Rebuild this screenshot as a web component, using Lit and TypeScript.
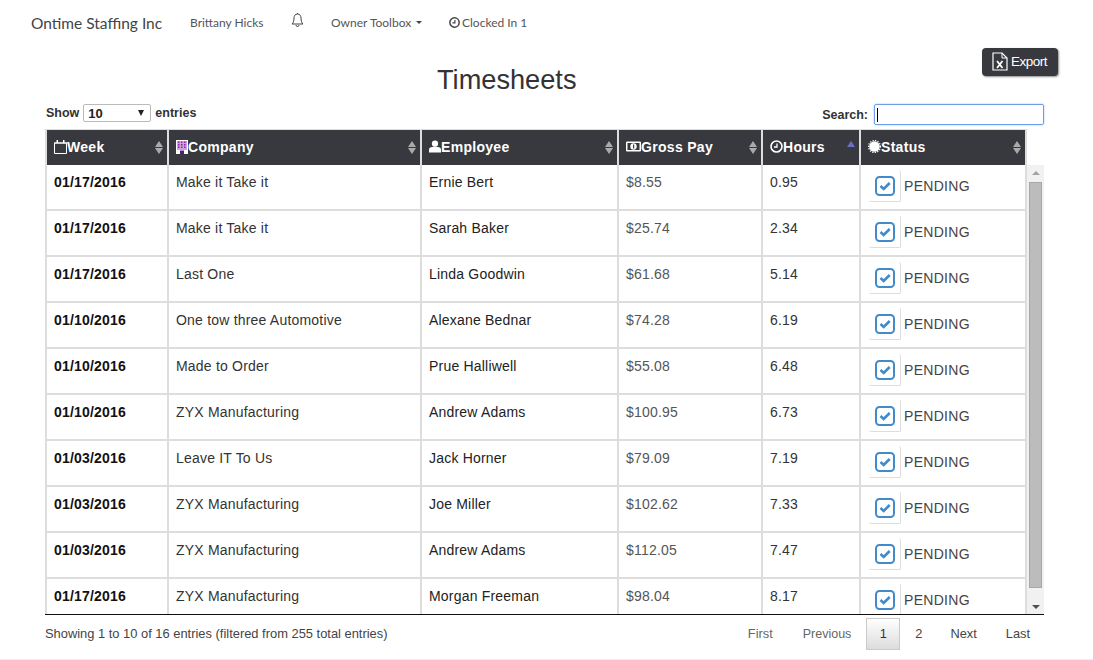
import { LitElement, html, css, svg } from 'lit';
import { customElement } from 'lit/decorators.js';

const rows = [
  ['01/17/2016', 'Make it Take it', 'Ernie Bert', '$8.55', '0.95'],
  ['01/17/2016', 'Make it Take it', 'Sarah Baker', '$25.74', '2.34'],
  ['01/17/2016', 'Last One', 'Linda Goodwin', '$61.68', '5.14'],
  ['01/10/2016', 'One tow three Automotive', 'Alexane Bednar', '$74.28', '6.19'],
  ['01/10/2016', 'Made to Order', 'Prue Halliwell', '$55.08', '6.48'],
  ['01/10/2016', 'ZYX Manufacturing', 'Andrew Adams', '$100.95', '6.73'],
  ['01/03/2016', 'Leave IT To Us', 'Jack Horner', '$79.09', '7.19'],
  ['01/03/2016', 'ZYX Manufacturing', 'Joe Miller', '$102.62', '7.33'],
  ['01/03/2016', 'ZYX Manufacturing', 'Andrew Adams', '$112.05', '7.47'],
  ['01/17/2016', 'ZYX Manufacturing', 'Morgan Freeman', '$98.04', '8.17'],
];

const icons = {
  calendar: svg`<svg width="13" height="14" viewBox="0 0 13 14"><path d="M.5 3h12v10.500H.5z" fill="none" stroke="#fff"/><path d="M0 2.500h13v1H0zM2.500 0h1.500v3H2.500zM9 0h1.500v3H9z" fill="#fff"/></svg>`,
  building: svg`<svg width="12" height="14" viewBox="0 0 12 14"><rect width="12" height="14" fill="#fff"/><path d="M1 1h10v9H1z" fill="#c9a2d8"/><path d="M2 1.500h1.500V3H2zM5 1.500h1.500V3H5zM8 1.500h1.500V3H8zM2 4h1.500v1.500H2zM5 4h1.500v1.500H5zM8 4h1.500v1.500H8zM2 6.500h1.500V8H2zM5 6.500h1.500V8H5zM8 6.500h1.500V8H8z" fill="#9a22a8"/><path d="M4 10.500h4V14H4z" fill="#5a1a80"/></svg>`,
  user: svg`<svg width="12" height="13" viewBox="0 0 13 13"><circle cx="6.500" cy="3.500" r="3.400" fill="#fff"/><path d="M0 13v-3c0-2 1.500-3 3.500-3h6c2 0 3.500 1 3.500 3v3z" fill="#fff"/></svg>`,
  money: svg`<svg width="15" height="11" viewBox="0 0 15 11"><rect width="15" height="10" y=".5" rx="1" fill="#fff"/><rect x="1.500" y="2" width="12" height="7" fill="#38383f"/><circle cx="7.500" cy="5.500" r="3.200" fill="#fff"/><path d="M7 3.500h1.200v4H7z" fill="#38383f"/></svg>`,
  clock: svg`<svg width="13" height="13" viewBox="0 0 13 13"><circle cx="6.500" cy="6.500" r="5.500" fill="none" stroke="#fff" stroke-width="1.600"/><path d="M7 3.500v3.500H4" fill="none" stroke="#fff" stroke-width="1.300"/></svg>`,
  cert: svg`<svg width="13" height="13" viewBox="0 0 13 13"><circle cx="6.500" cy="6.500" r="5.300" fill="#fff"/><circle cx="6.500" cy="6.500" r="6" fill="none" stroke="#fff" stroke-width="1.200" stroke-dasharray="1.300 1.250"/></svg>`,
};

const check = svg`<svg width="20" height="20" viewBox="0 0 20 20"><rect x="1" y="1" width="18" height="18" rx="3.500" fill="none" stroke="#428bca" stroke-width="2"/><path d="M5.500 10l3.200 3 6-6" fill="none" stroke="#428bca" stroke-width="2.600"/></svg>`;

const headers = [
  { label: 'Week', icon: icons.calendar, sort: 'both' },
  { label: 'Company', icon: icons.building, sort: 'both' },
  { label: 'Employee', icon: icons.user, sort: 'both' },
  { label: 'Gross Pay', icon: icons.money, sort: 'both' },
  { label: 'Hours', icon: icons.clock, sort: 'asc' },
  { label: 'Status', icon: icons.cert, sort: 'both' },
];

const cols = html`<colgroup>
  <col style="width:124px" /><col style="width:253px" /><col style="width:197px" />
  <col style="width:144px" /><col style="width:98px" /><col style="width:166px" />
</colgroup>`;

@customElement('app-root')
export class AppRoot extends LitElement {
  static styles = css`
    :host {
      display: block;
      height: 660px;
      overflow: hidden;
      font-family: 'Liberation Sans', Arial, sans-serif;
      color: #333;
      background: #fff;
    }
    .nav {
      display: flex;
      align-items: center;
      height: 45px;
      padding-left: 31px;
      font-family: Lato, sans-serif;
      font-size: 12px;
      color: #555;
    }
    .brand {
      font-size: 15.500px;
      color: #444;
      width: 159px;
    }
    .nav span {
      display: inline-flex;
      align-items: center;
    }
    .user { width: 101px; }
    .bell { width: 40px; margin-top: -5px; }
    .toolbox { width: 118px; }
    .caret {
      margin-left: 5px;
      border-left: 3px solid transparent;
      border-right: 3px solid transparent;
      border-top: 3px solid #444;
    }
    .clocked { gap: 2px; }
    .title-row {
      display: flex;
      justify-content: space-between;
      align-items: flex-start;
      height: 58px;
      box-sizing: border-box;
      padding: 3px 35px 0 437px;
    }
    h1 {
      margin: 16px 0 0;
      font-size: 27.200px;
      font-weight: 400;
      line-height: 32px;
    }
    .export {
      display: flex;
      align-items: center;
      gap: 3px;
      width: 76px;
      height: 28px;
      box-sizing: border-box;
      padding: 0 0 1px 10px;
      background: #38383f;
      color: #fff;
      border-radius: 4px;
      font-size: 13.500px;
      letter-spacing: -0.5px;
      box-shadow: 1px 1px 2px rgba(0, 0, 0, 0.45);
    }
    .content {
      margin: 0 49px 0 45px;
    }
    .controls {
      display: flex;
      justify-content: space-between;
      align-items: flex-start;
      height: 26px;
      font-size: 12.500px;
      font-weight: 700;
      color: #333;
    }
    .length, .search { display: flex; align-items: center; }
    .length { padding-left: 1px; margin-top: 1px; }
    .select {
      display: flex;
      justify-content: space-between;
      align-items: center;
      box-sizing: border-box;
      width: 68px;
      height: 18px;
      margin: 0 4px 0 4px;
      padding: 0 6px 0 4px;
      border: 1px solid #bbb;
      border-radius: 2px;
      font-size: 13px;
      color: #222;
    }
    .arrow {
      border-left: 3.500px solid transparent;
      border-right: 3.500px solid transparent;
      border-top: 6px solid #222;
    }
    .search { margin-top: 1px; }
    .input {
      box-sizing: border-box;
      width: 170px;
      height: 21px;
      margin-left: 6px;
      padding: 3px 2px;
      border: 1px solid #6d9eeb;
      border-radius: 2px;
      box-shadow: 0 0 2px #9bbcf5;
    }
    .cursor {
      display: block;
      width: 1px;
      height: 14px;
      background: #000;
    }
    table {
      table-layout: fixed;
      border-collapse: separate;
      border-spacing: 0;
      width: 982px;
    }
    th {
      position: relative;
      box-sizing: border-box;
      height: 36px;
      padding: 0 0 2px 7px;
      text-align: left;
      background: #38383f;
      color: #fff;
      font-size: 14px;
      font-weight: 700;
      border-top: 1px solid #ddd;
      border-right: 2px solid #ddd;
      letter-spacing: 0.3px;
    }
    th:first-child { border-left: 2px solid #ddd; }
    th > div {
      display: flex;
      align-items: center;
    }
    .sort {
      position: absolute;
      right: 4px;
      top: 11px;
      display: flex;
      flex-direction: column;
      gap: 1px;
    }
    .up, .down {
      border-left: 4px solid transparent;
      border-right: 4px solid transparent;
    }
    .up { border-bottom: 6px solid #aaa; }
    .down { border-top: 6px solid #aaa; }
    .up.on { border-bottom-color: #6e6ec8; }
    .scroll {
      display: flex;
      height: 450px;
      border-bottom: 1px solid #111;
      box-sizing: border-box;
    }
    .view {
      width: 982px;
      overflow: hidden;
    }
    td {
      box-sizing: border-box;
      height: 46px;
      padding: 9px 0 0 7px;
      vertical-align: top;
      font-size: 14px;
      line-height: 16px;
      letter-spacing: 0.2px;
      color: #333;
      border-right: 2px solid #ddd;
      border-bottom: 2px solid #ddd;
    }
    td:first-child {
      border-left: 2px solid #ddd;
      font-weight: 700;
      color: #111;
    }
    td.emp { color: #222; }
    td.pay { color: #555; }
    td.status {
      padding: 5px 0 0 8px;
    }
    .status-wrap {
      display: flex;
      align-items: center;
      gap: 3px;
      color: #444;
      letter-spacing: 0.3px;
    }
    .check {
      display: flex;
      align-items: center;
      justify-content: center;
      width: 31px;
      height: 31px;
      border-right: 1px solid #ddd;
      border-bottom: 1px solid #ddd;
      border-radius: 2px;
    }
    .bar {
      display: flex;
      flex-direction: column;
      align-items: center;
      width: 17px;
      margin-left: 0;
      background: #f1f1f1;
    }
    .bar i {
      margin: 6px 0;
      border-left: 4px solid transparent;
      border-right: 4px solid transparent;
    }
    .bar .top { border-bottom: 4px solid #a3a3a3; margin-bottom: 7px; }
    .bar .bot { border-top: 4px solid #505050; margin-top: 17px; margin-bottom: 5px; }
    .thumb {
      flex: 1;
      width: 13px;
      background: #bcbcbc;
      border: 1px solid #a8a8a8;
      box-sizing: border-box;
    }
    .foot {
      display: flex;
      justify-content: space-between;
      align-items: center;
      height: 38px;
      font-size: 12.900px;
      color: #444;
    }
    .info { padding-bottom: 2px; }
    .pager {
      display: flex;
      align-items: center;
      font-size: 12.800px;
    }
    .pager span {
      padding: 0 14px;
      line-height: 30px;
    }
    .pager .off { color: #666; }
    .pager .first { padding-right: 15px; }
    .pager .prev { padding: 0 15px; font-size: 12.500px; }
    .pager .cur {
      box-sizing: border-box;
      width: 34px;
      height: 32px;
      margin-right: 1px;
      padding: 0;
      text-align: center;
      border: 1px solid #cacaca;
      background: linear-gradient(#fff, #dcdcdc);
      color: #333;
    }
    .pager .last { padding-left: 15px; }
    .rule {
      height: 1px;
      margin-top: 6px;
      background: #eee;
    }
  `;

  render() {
    return html`
      <nav class="nav">
        <span class="brand">Ontime Staffing Inc</span>
        <span class="user">Brittany Hicks</span>
        <span class="bell">
          <svg width="13" height="14" viewBox="0 0 13 14"><path d="M6.500 1C4 1 3 3 3 5c0 3-.8 5-2 6h11c-1.200-1-2-3-2-6 0-2-1-4-3.500-4zM6.500 0v1M5 12a1.500 1.500 0 0 0 3 0" fill="none" stroke="#444"/></svg>
        </span>
        <span class="toolbox">Owner Toolbox<i class="caret"></i></span>
        <span class="clocked">
          <svg width="11" height="11" viewBox="0 0 13 13"><circle cx="6.500" cy="6.500" r="5.500" fill="none" stroke="#444" stroke-width="1.800"/><path d="M7 3.500v3.500H4" fill="none" stroke="#444" stroke-width="1.400"/></svg>
          Clocked In 1
        </span>
      </nav>
      <div class="title-row">
        <h1>Timesheets</h1>
        <div class="export">
          <svg width="16" height="19" viewBox="0 0 16 19"><path d="M1 1h9l5 5v12H1z" fill="none" stroke="#fff" stroke-width="1.200"/><path d="M10 1v5h5" fill="none" stroke="#fff"/><path d="M5 9l5.500 7M10.500 9L5 16" stroke="#fff" stroke-width="1.800"/></svg>
          Export
        </div>
      </div>
      <div class="content">
        <div class="controls">
          <div class="length">
            Show
            <div class="select">10<i class="arrow"></i></div>
            entries
          </div>
          <div class="search">
            Search:
            <div class="input"><i class="cursor"></i></div>
          </div>
        </div>
        <table>
          ${cols}
          <thead>
            <tr>
              ${headers.map(
                (h) => html`<th>
                  <div>${h.icon}${h.label}</div>
                  <div class="sort">
                    ${h.sort === 'asc'
                      ? html`<i class="up on"></i>`
                      : html`<i class="up"></i><i class="down"></i>`}
                  </div>
                </th>`,
              )}
            </tr>
          </thead>
        </table>
        <div class="scroll">
          <div class="view">
            <table>
              ${cols}
              <tbody>
                ${rows.map(
                  (r) => html`<tr>
                    <td>${r[0]}</td>
                    <td>${r[1]}</td>
                    <td class="emp">${r[2]}</td>
                    <td class="pay">${r[3]}</td>
                    <td>${r[4]}</td>
                    <td class="status">
                      <div class="status-wrap">
                        <div class="check">${check}</div>
                        PENDING
                      </div>
                    </td>
                  </tr>`,
                )}
              </tbody>
            </table>
          </div>
          <div class="bar">
            <i class="top"></i>
            <div class="thumb"></div>
            <i class="bot"></i>
          </div>
        </div>
        <div class="foot">
          <div class="info">Showing 1 to 10 of 16 entries (filtered from 255 total entries)</div>
          <div class="pager">
            <span class="off first">First</span>
            <span class="off prev">Previous</span>
            <span class="cur">1</span>
            <span>2</span>
            <span>Next</span>
            <span class="last">Last</span>
          </div>
        </div>
      </div>
      <div class="rule"></div>
    `;
  }
}
